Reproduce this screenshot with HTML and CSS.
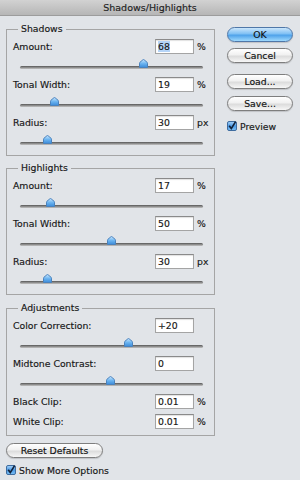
FILE: index.html
```html
<!DOCTYPE html>
<html lang="en">

<head>
    <meta charset="UTF-8">
    <title>Shadows/Highlights</title>
    <link rel="stylesheet" href="styles.css">
</head>

<body>
    <!-- shared gradients for thumbs and checkboxes -->
    <svg class="defs" width="0" height="0">
        <defs>
            <linearGradient id="thumb-fill" x1="0" y1="0" x2="0" y2="1">
                <stop offset="0" stop-color="#c8e7fe" />
                <stop offset="0.5" stop-color="#6cb4f0" />
                <stop offset="1" stop-color="#3a8ad9" />
            </linearGradient>
            <linearGradient id="check-fill" x1="0" y1="0" x2="0" y2="1">
                <stop offset="0" stop-color="#a9d4fa" />
                <stop offset="0.5" stop-color="#4c9ae6" />
                <stop offset="1" stop-color="#7cc0f6" />
            </linearGradient>
        </defs>
    </svg>

    <div class="window">
        <div class="titlebar">Shadows/Highlights</div>

        <div class="content">
            <div class="main">
                <fieldset class="group">
                    <legend>Shadows</legend>
                    <div class="param">
                        <div class="row"><span class="label">Amount:</span><span class="field"><span class="sel">68</span></span><span class="unit">%</span></div>
                        <div class="slider"><div class="track"></div><svg class="thumb" style="left:119px" width="9" height="9" viewBox="0 0 9 9"><path d="M0.5 8.5V4.2Q0.5 3.6 1 3.2L3.9 0.8Q4.5 0.3 5.1 0.8L8 3.2Q8.5 3.6 8.5 4.2V8.5Z" /></svg></div>
                    </div>
                    <div class="param">
                        <div class="row"><span class="label">Tonal Width:</span><span class="field">19</span><span class="unit">%</span></div>
                        <div class="slider"><div class="track"></div><svg class="thumb" style="left:30px" width="9" height="9" viewBox="0 0 9 9"><path d="M0.5 8.5V4.2Q0.5 3.6 1 3.2L3.9 0.8Q4.5 0.3 5.1 0.8L8 3.2Q8.5 3.6 8.5 4.2V8.5Z" /></svg></div>
                    </div>
                    <div class="param">
                        <div class="row"><span class="label">Radius:</span><span class="field">30</span><span class="unit">px</span></div>
                        <div class="slider"><div class="track"></div><svg class="thumb" style="left:23px" width="9" height="9" viewBox="0 0 9 9"><path d="M0.5 8.5V4.2Q0.5 3.6 1 3.2L3.9 0.8Q4.5 0.3 5.1 0.8L8 3.2Q8.5 3.6 8.5 4.2V8.5Z" /></svg></div>
                    </div>
                </fieldset>

                <fieldset class="group highlights">
                    <legend>Highlights</legend>
                    <div class="param">
                        <div class="row"><span class="label">Amount:</span><span class="field">17</span><span class="unit">%</span></div>
                        <div class="slider"><div class="track"></div><svg class="thumb" style="left:26px" width="9" height="9" viewBox="0 0 9 9"><path d="M0.5 8.5V4.2Q0.5 3.6 1 3.2L3.9 0.8Q4.5 0.3 5.1 0.8L8 3.2Q8.5 3.6 8.5 4.2V8.5Z" /></svg></div>
                    </div>
                    <div class="param">
                        <div class="row"><span class="label">Tonal Width:</span><span class="field">50</span><span class="unit">%</span></div>
                        <div class="slider"><div class="track"></div><svg class="thumb" style="left:87px" width="9" height="9" viewBox="0 0 9 9"><path d="M0.5 8.5V4.2Q0.5 3.6 1 3.2L3.9 0.8Q4.5 0.3 5.1 0.8L8 3.2Q8.5 3.6 8.5 4.2V8.5Z" /></svg></div>
                    </div>
                    <div class="param">
                        <div class="row"><span class="label">Radius:</span><span class="field">30</span><span class="unit">px</span></div>
                        <div class="slider"><div class="track"></div><svg class="thumb" style="left:23px" width="9" height="9" viewBox="0 0 9 9"><path d="M0.5 8.5V4.2Q0.5 3.6 1 3.2L3.9 0.8Q4.5 0.3 5.1 0.8L8 3.2Q8.5 3.6 8.5 4.2V8.5Z" /></svg></div>
                    </div>
                </fieldset>

                <fieldset class="group adjustments">
                    <legend>Adjustments</legend>
                    <div class="param">
                        <div class="row"><span class="label">Color Correction:</span><span class="field">+20</span><span class="unit"></span></div>
                        <div class="slider"><div class="track"></div><svg class="thumb" style="left:104px" width="9" height="9" viewBox="0 0 9 9"><path d="M0.5 8.5V4.2Q0.5 3.6 1 3.2L3.9 0.8Q4.5 0.3 5.1 0.8L8 3.2Q8.5 3.6 8.5 4.2V8.5Z" /></svg></div>
                    </div>
                    <div class="param">
                        <div class="row"><span class="label">Midtone Contrast:</span><span class="field">0</span><span class="unit"></span></div>
                        <div class="slider"><div class="track"></div><svg class="thumb" style="left:86px" width="9" height="9" viewBox="0 0 9 9"><path d="M0.5 8.5V4.2Q0.5 3.6 1 3.2L3.9 0.8Q4.5 0.3 5.1 0.8L8 3.2Q8.5 3.6 8.5 4.2V8.5Z" /></svg></div>
                    </div>
                    <div class="row"><span class="label">Black Clip:</span><span class="field">0.01</span><span class="unit">%</span></div>
                    <div class="row clip"><span class="label">White Clip:</span><span class="field">0.01</span><span class="unit">%</span></div>
                </fieldset>

                <div class="btn reset">Reset Defaults</div>
                <label class="check more">
                    <svg width="10" height="10" viewBox="0 0 10 10"><rect x="0.5" y="0.5" width="9" height="9" rx="1.5" fill="url(#check-fill)" stroke="#3f6c9f" /><path d="M2.2 4.8L4.3 7.6L8.6 0.6" fill="none" stroke="#12223a" stroke-width="1.7" /></svg>
                    Show More Options
                </label>
            </div>

            <div class="side">
                <div class="btn default">OK</div>
                <div class="btn cancel">Cancel</div>
                <div class="btn load">Load...</div>
                <div class="btn save">Save...</div>
                <label class="check preview">
                    <svg width="10" height="10" viewBox="0 0 10 10"><rect x="0.5" y="0.5" width="9" height="9" rx="1.5" fill="url(#check-fill)" stroke="#3f6c9f" /><path d="M2.2 4.8L4.3 7.6L8.6 0.6" fill="none" stroke="#12223a" stroke-width="1.7" /></svg>
                    Preview
                </label>
            </div>
        </div>
    </div>
</body>

</html>
```

FILE: styles.css
```css
body {
    margin: 0;
    background-color: #e1e4e8;
    font-family: 'DejaVu Sans', sans-serif;
    font-size: 9.3px;
    color: #161616;
    -webkit-text-stroke: 0.15px #161616;
    width: 300px;
    height: 480px;
    overflow: hidden;
}

.defs {
    position: absolute;
}

.titlebar {
    height: 15px;
    line-height: 15px;
    text-align: center;
    font-size: 9.5px;
    color: #262626;
    background: linear-gradient(#d2d2d2, #b6b6b6);
    border-bottom: 1px solid #9c9c9c;
}

.content {
    display: flex;
    padding-left: 6px;
}

.main {
    width: 209px;
    padding-top: 7px;
}

.side {
    width: 66px;
    margin-left: 12px;
    padding-top: 11px;
}

/* group boxes */
.group {
    margin: 0;
    padding: 4px 1px 2px 6px;
    border: 1px solid #a5a5a5;
    min-width: 0;
}

.group legend {
    line-height: 12px;
    padding: 0 3px;
    margin-left: 5px;
}

.highlights {
    margin-top: 6px;
}

.adjustments {
    margin-top: 7px;
    padding-bottom: 6px;
}

.row {
    display: flex;
    align-items: center;
    height: 15px;
}

.row.clip {
    margin-top: 5px;
}

.label {
    flex: 1;
}

.field {
    box-sizing: border-box;
    width: 39px;
    height: 15px;
    line-height: 13px;
    padding-left: 2px;
    background: #fff;
    border: 1px solid #a4a4a4;
    border-top-color: #8a8a8a;
    box-shadow: inset 0 1px 1px rgba(0, 0, 0, 0.12);
}

.sel {
    background: #b5d4f7;
}

.unit {
    width: 16px;
    margin-left: 3px;
}

/* sliders */
.slider {
    position: relative;
    height: 23px;
    margin-left: 7px;
    width: 183px;
}

.track {
    position: relative;
    top: 12px;
    height: 3px;
    border-radius: 2px;
    background: linear-gradient(#555, #8c8c8c, #c4c4c4);
}

.thumb {
    position: absolute;
    top: 5px;
}

.thumb path {
    fill: url(#thumb-fill);
    stroke: #4a82bd;
    stroke-width: 1;
}

/* aqua buttons */
.btn {
    box-sizing: border-box;
    height: 15px;
    line-height: 13px;
    text-align: center;
    border: 1px solid #7e7e7e;
    border-radius: 8px;
    background: linear-gradient(#ffffff, #f1f1f1 45%, #dcdcdc 55%, #f7f7f7);
    box-shadow: 0 1px 1px rgba(0, 0, 0, 0.15);
    color: #111;
}

.btn.default {
    border-color: #4f77a8;
    background: linear-gradient(#cbe6fb, #7fc0f4 45%, #4ea2ea 55%, #9fd9fd);
}

.cancel {
    margin-top: 6px;
}

.load {
    margin-top: 11px;
}

.save {
    margin-top: 7px;
}

.reset {
    width: 97px;
    margin-top: 7px;
}

.check {
    display: flex;
    align-items: center;
    gap: 3px;
    height: 10px;
}

.preview {
    margin-top: 10px;
}

.more {
    margin-top: 7px;
}
```
